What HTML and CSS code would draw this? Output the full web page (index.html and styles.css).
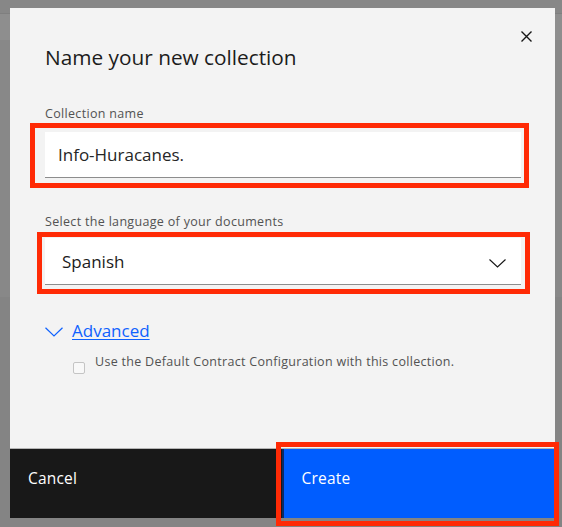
FILE: index.html
```html
<!DOCTYPE html>
<html lang="en">
<head>
<meta charset="utf-8">
<title>Name your new collection</title>
<link rel="stylesheet" href="styles.css">
</head>
<body>
<div class="modal">
  <div class="modal-header">
    <h2 class="title">Name your new collection</h2>
    <button class="close" aria-label="Close">
      <svg width="11" height="11" viewBox="0 0 11 11"><path d="M0.5 0.5 L10.5 10.5 M10.5 0.5 L0.5 10.5" stroke="#161616" stroke-width="1.4" fill="none"/></svg>
    </button>
  </div>
  <div class="modal-body">
    <div class="label label-first">Collection name</div>
    <div class="input">Info-Huracanes.</div>
    <div class="label label-second">Select the language of your documents</div>
    <div class="select">
      <span>Spanish</span>
      <svg class="select-chev" width="17" height="9" viewBox="0 0 17 9"><path d="M0.5 0.5 L8.5 8 L16.5 0.5" stroke="#161616" stroke-width="1.1" fill="none"/></svg>
    </div>
    <div class="advanced">
      <svg class="adv-chev" width="18" height="10" viewBox="0 0 18 10"><path d="M0.5 0.7 L9 9 L17.5 0.7" stroke="#0f62fe" stroke-width="1.2" fill="none"/></svg>
      <a class="adv-link" href="#">Advanced</a>
    </div>
    <div class="check-row">
      <span class="checkbox"></span>
      <span class="check-text">Use the Default Contract Configuration with this collection.</span>
    </div>
  </div>
  <div class="modal-footer">
    <button class="btn btn-cancel">Cancel</button>
    <button class="btn btn-create">Create</button>
  </div>
</div>
<div class="mark mark-name"></div>
<div class="mark mark-lang"></div>
<div class="mark mark-create"></div>
</body>
</html>
```
FILE: styles.css
```css
html, body {
  margin: 0;
  padding: 0;
}
body {
  width: 562px;
  height: 527px;
  overflow: hidden;
  position: relative;
  font-family: "Open Sans", "Noto Sans", sans-serif;
  color: #161616;
  background: linear-gradient(to bottom,
    #878787 0px, #878787 13px,
    #7f7f7f 13px, #7f7f7f 14px,
    #8e8e8e 14px, #8e8e8e 40px,
    #888888 40px, #888888 297px,
    #848484 297px, #848484 527px);
  padding-top: 8px;
  box-sizing: border-box;
}
.modal {
  margin-left: 10px;
  width: 545px;
  height: 510px;
  background: #f3f3f3;
  display: flex;
  flex-direction: column;
}
.modal-header {
  display: flex;
  justify-content: space-between;
  align-items: flex-start;
  padding-left: 35px;
}
.title {
  margin: 35px 0 0 0;
  font-size: 20.8px;
  line-height: 28px;
  font-weight: 400;
  color: #1c1c1c;
}
.close {
  margin: 23px 23px 0 0;
  padding: 0;
  border: 0;
  background: none;
  width: 11px;
  height: 11px;
  display: flex;
}
.modal-body {
  padding: 0 34px 0 35px;
  display: flex;
  flex-direction: column;
}
.label {
  font-size: 12.5px;
  line-height: 16px;
  color: #525252;
  letter-spacing: 0.32px;
}
.label-first { margin-top: 35px; }
.label-second { margin-top: 36px; }
.input {
  margin-top: 10px;
  height: 45px;
  background: #fff;
  border-bottom: 1px solid #8d8d8d;
  font-size: 17px;
  line-height: 45px;
  padding-left: 13px;
  color: #262626;
}
.select {
  margin-top: 8px;
  height: 46px;
  background: #fff;
  border-bottom: 1px solid #8d8d8d;
  display: flex;
  align-items: center;
  justify-content: space-between;
  padding: 0 15px 0 17px;
  font-size: 17px;
  color: #1c1c1c;
}
.select-chev { margin-top: 5px; }
.advanced {
  margin-top: 34px;
  display: flex;
  align-items: center;
  height: 24px;
}
.adv-chev { margin-top: 2px; }
.adv-link {
  margin-left: 9px;
  font-size: 17px;
  line-height: 24px;
  color: #0f62fe;
  text-decoration: underline;
  text-decoration-thickness: 1px;
  text-underline-offset: 2px;
}
.check-row {
  margin-top: 11px;
  display: flex;
  align-items: flex-start;
  padding-left: 28px;
}
.checkbox {
  width: 10px;
  height: 10px;
  margin-top: 8px;
  border: 1px solid #c4c4c4;
  border-radius: 2px;
  background: #f8f8f8;
}
.check-text {
  margin-left: 10px;
  font-size: 12.5px;
  line-height: 16px;
  letter-spacing: 0.3px;
  color: #525252;
}
.modal-footer {
  margin-top: auto;
  display: flex;
  height: 69px;
  border-top: 1px solid #b4b4b4;
}
.btn {
  flex: 1;
  border: 0;
  margin: 0;
  font-family: inherit;
  font-size: 15.5px;
  line-height: 20px;
  text-align: left;
  padding: 19px 0 0 18px;
  display: flex;
  align-items: flex-start;
  color: #fff;
  letter-spacing: 0.2px;
}
.btn-cancel { background: #181818; }
.btn-create {
  background: #005dff;
  border-left: 2px solid #0b2a66;
}
.mark {
  position: absolute;
  border: 5px solid #ff2a05;
  box-sizing: border-box;
}
.mark-name { left: 30px; top: 123px; width: 499px; height: 65px; }
.mark-lang { left: 37px; top: 232px; width: 493px; height: 62px; }
.mark-create { left: 276px; top: 442px; width: 283px; height: 84px; }
```
